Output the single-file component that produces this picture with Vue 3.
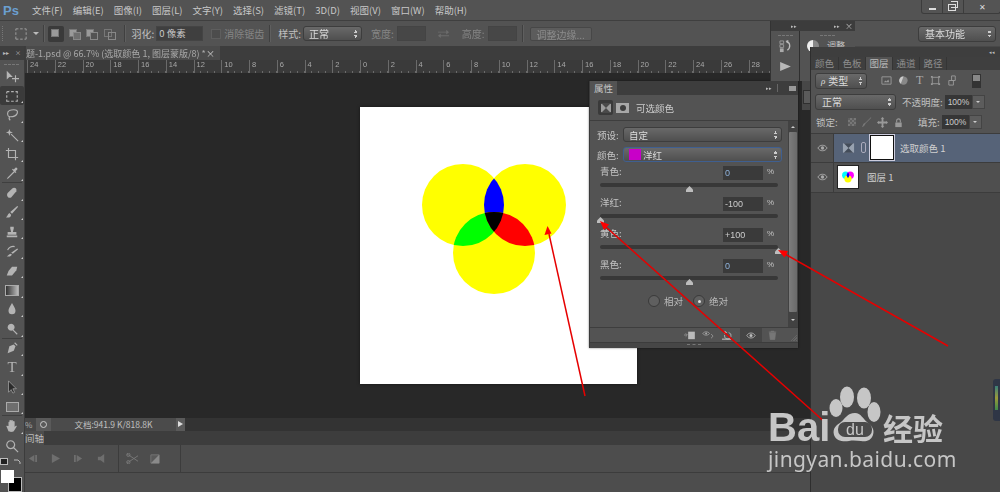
<script setup>
const menus = ['文件(F)', '编辑(E)', '图像(I)', '图层(L)', '文字(Y)', '选择(S)', '滤镜(T)', '3D(D)', '视图(V)', '窗口(W)', '帮助(H)']

const rulerLabels = [24, 22, 20, 18, 16, 14, 12, 10, 8, 6, 4, 2, 0, 2, 4, 6, 8, 10, 12, 14, 16, 18, 20, 22, 24, 26, 28]

// f = filled path, s = stroked path, sep = line above the tool, more = flyout corner
const tools = [
  { f: 'M2 2v10l3-3h4z', s: 'M12 7v8M8 11h8' },
  { s: 'M2 3h3M7 3h3M12 3h2v2M14 7v3M14 12v2h-2M10 14H7M5 14H2v-2M2 10V7M2 5V3', active: true, more: true },
  { s: 'M3 6c0-3 4-4 7-4s5 1 4 4-5 4-8 4-3-2-3-4zM5 10c-1 2 0 3 1 4', more: true },
  { f: 'M5 1l1 3 3 1-3 1-1 3-1-3-3-1 3-1z', s: 'M7 7l8 8', more: true },
  { s: 'M4 1v11h11M1 4h11v11', more: true },
  { f: 'M10 6l-7 7-1 2 2-1 7-7zM9 3l1 1 2-2c1-1 3 1 2 2l-2 2 1 1-1 1-4-4z', more: true },
  { f: 'M3 8l5-5c2-2 6-1 5 3l-6 7c-3 2-6-2-4-5z', sep: true, more: true },
  { f: 'M14 1l1 1-7 8-2-2zM5 9l2 2c0 3-3 4-6 3 2-1 2-4 4-5z', more: true },
  { f: 'M6 2h4v2l-1 4h4v3H3V8h4L6 4zM2 12h12v2H2z', more: true },
  { f: 'M14 5l1 1-6 5-2-1zM6 11l2 1c-1 2-3 3-6 2 2-1 2-2 4-3z', s: 'M3 7c1-3 5-5 8-4', more: true },
  { f: 'M8 3h6l-1 4-5 6H2l2-5z', more: true },
  { grad: true, more: true },
  { f: 'M8 1c2 4 4 6 4 9a4 4 0 0 1-8 0c0-3 2-5 4-9z', more: true },
  { f: 'M7 2a4 4 0 1 0 .01 0z', s: 'M9 9l5 5', more: true },
  { f: 'M3 14l2-8 5-2 2 2-2 5z', s: 'M11 2l3 3', sep: true, more: true },
  { text: 'T', more: true },
  { f: 'M4 1v13l3-3 2 4 2-1-2-4h4z', dark: true, more: true },
  { box: true, more: true },
  { f: 'M4 8V4c0-1 1-1 1 0v3V2c0-1 2-1 2 0v5V2c0-1 2-1 2 0v5V3c0-1 2-1 2 0v6l1-1c1-1 2 0 1 1l-3 5c-1 1-5 1-6 0L2 9c-1-1 0-2 1-1z', sep: true, more: true },
  { s: 'M6.5 2a4.5 4.5 0 1 0 .01 0zM10 10l5 5' }
]

const colorRows = [
  { name: '青色', value: '0', pos: 50, blue: true },
  { name: '洋红', value: '-100', pos: 0 },
  { name: '黄色', value: '+100', pos: 100 },
  { name: '黑色', value: '0', pos: 50, blue: true }
]

const layerTabs = ['颜色', '色板', '图层', '通道', '路径']
</script>

<template>
  <div class="ps">
    <div class="shell">
      <header class="menu">
        <span class="logo">Ps</span>
        <nav class="menu-items">
          <span v-for="m in menus" :key="m">{{ m }}</span>
        </nav>
        <div class="win-btns">
          <span class="win-btn min"><i></i></span>
          <span class="win-btn res"><i></i><b></b></span>
          <span class="win-btn cls">✕</span>
        </div>
      </header>

      <div class="options">
        <span class="grip-v"></span>
        <svg class="opt-ico first" viewBox="0 0 14 14"><path d="M1 1h3M6 1h3M11 1h2v2M13 5v3M13 10v3h-2M9 13H6M4 13H1v-3M1 8V5M1 3V1" fill="none" stroke="#aaa" /></svg>
        <span class="caret"></span>
        <span class="opt-sep"></span>
        <span class="mode active"><i></i></span>
        <span class="mode plus"><i></i><b></b></span>
        <span class="mode minus"><i></i><b></b></span>
        <span class="mode cross"><i></i><b></b></span>
        <span class="opt-sep s2"></span>
        <span class="lbl l-feather">羽化:</span>
        <span class="field f-feather">0 像素</span>
        <span class="check"></span>
        <span class="lbl dim">消除锯齿</span>
        <span class="opt-sep s3"></span>
        <span class="lbl l-style">样式:</span>
        <span class="select s-style">正常</span>
        <span class="lbl dim l-w">宽度:</span>
        <span class="field blank"></span>
        <svg class="swap" viewBox="0 0 14 12"><path d="M1 4h9V2l3 2.5L10 7V5H1zM13 8H4V6L1 8.500 4 11V9h9z" fill="#6c6c6c" /></svg>
        <span class="lbl dim l-h">高度:</span>
        <span class="field blank"></span>
        <span class="opt-sep s4"></span>
        <span class="edge-btn">调整边缘...</span>
        <span class="select s-work">基本功能</span>
      </div>

      <div class="work">
        <aside class="tools">
          <div class="tools-head"><span>▸▸</span><span>×</span></div>
          <div class="tools-grip"></div>
          <div class="tool-list">
            <div v-for="(t, i) in tools" :key="i" class="tool" :class="{ on: t.active, sep: t.sep, more: t.more }">
              <span v-if="t.text" class="tool-t">{{ t.text }}</span>
              <span v-else-if="t.grad" class="tool-grad"></span>
              <span v-else-if="t.box" class="tool-box"></span>
              <svg v-else viewBox="0 0 16 16" class="tool-ico">
                <path v-if="t.f" :d="t.f" :fill="t.dark ? '#2b2b2b' : '#b4b4b4'" :stroke="t.dark ? '#aaa' : 'none'" stroke-width=".8" />
                <path v-if="t.s" :d="t.s" fill="none" stroke="#b4b4b4" stroke-width="1.3" />
              </svg>
            </div>
          </div>
          <div class="swatches">
            <span class="mini-sw"></span>
            <svg class="sw-swap" viewBox="0 0 8 8"><path d="M1 2h4l2 2v2" fill="none" stroke="#bbb" /></svg>
            <span class="sw-bg"></span>
            <span class="sw-fg"></span>
          </div>
        </aside>

        <main class="center">
          <div class="tabs">
            <div class="doc-tab">
              <span class="doc-title">题-1.psd @ 66.7% (选取颜色 1, 图层蒙版/8) *</span>
              <span class="doc-x">×</span>
            </div>
          </div>
          <div class="ruler">
            <span v-for="(n, i) in rulerLabels" :key="i" class="rule-cell">{{ n }}</span>
          </div>
          <div class="canvas">
            <svg class="doc" viewBox="0 0 277 277">
              <defs>
                <clipPath id="cl"><circle cx="103" cy="98" r="41" /></clipPath>
                <clipPath id="cr"><circle cx="165" cy="98" r="41" /></clipPath>
                <clipPath id="cb"><circle cx="134" cy="146" r="41" /></clipPath>
              </defs>
              <rect width="277" height="277" fill="#fff" />
              <circle cx="103" cy="98" r="41" fill="#ff0" />
              <circle cx="165" cy="98" r="41" fill="#ff0" />
              <circle cx="134" cy="146" r="41" fill="#ff0" />
              <g clip-path="url(#cl)"><circle cx="165" cy="98" r="41" fill="#00f" /></g>
              <g clip-path="url(#cl)"><circle cx="134" cy="146" r="41" fill="#0f0" /></g>
              <g clip-path="url(#cr)"><circle cx="134" cy="146" r="41" fill="#f00" /></g>
              <g clip-path="url(#cl)"><g clip-path="url(#cr)"><circle cx="134" cy="146" r="41" fill="#000" /></g></g>
            </svg>
          </div>
          <div class="status">
            <span class="st-pct">%</span>
            <span class="st-ico"><i></i></span>
            <span class="st-doc">文档:941.9 K/818.8K</span>
            <span class="st-arrow"></span>
          </div>
          <div class="timeline">
            <div class="tl-head"><div class="tl-tab"><span>间轴</span></div></div>
            <div class="tl-body">
              <div class="tl-controls">
                <svg viewBox="0 0 12 10"><path d="M8 1v8L2 5zM9 1h2v8H9z" fill="#6e6e6e" /></svg>
                <svg viewBox="0 0 12 10"><path d="M2 0v10l9-5z" fill="#6e6e6e" /></svg>
                <svg viewBox="0 0 12 10"><path d="M4 1v8l6-4zM1 1h2v8H1z" fill="#6e6e6e" /></svg>
                <svg viewBox="0 0 12 10"><path d="M2 3h3l4-3v10L5 7H2z" fill="#6e6e6e" /></svg>
                <span class="tl-sep"></span>
                <svg class="scissors" viewBox="0 0 14 12"><path d="M1 1l12 8M1 11l12-8" stroke="#7a7a7a" fill="none" /><circle cx="2.500" cy="2" r="1.800" fill="none" stroke="#7a7a7a" /><circle cx="2.500" cy="10" r="1.800" fill="none" stroke="#7a7a7a" /></svg>
                <svg class="trans" viewBox="0 0 12 12"><path d="M1 1h10v10H1z" fill="#5a5a5a" stroke="#7a7a7a" /><path d="M11 1v10H1z" fill="#8a8a8a" /></svg>
                <span class="tl-sep s2"></span>
              </div>
            </div>
          </div>
        </main>

        <aside class="dock">
          <div class="layers-top"><span>◂◂</span></div>
          <div class="layer-tabs">
            <span v-for="t in layerTabs" :key="t" class="ltab" :class="{ on: t === '图层' }">{{ t }}</span>
          </div>
          <div class="l-row filter">
            <span class="select s-kind"><em>ρ</em> 类型</span>
            <svg class="f-ico" viewBox="0 0 12 12"><path d="M1 2h10v8H1z" fill="none" stroke="#999" /><path d="M3 8l2-2 1 1 2-2 1 3z" fill="#999" /></svg>
            <svg class="f-ico" viewBox="0 0 12 12"><circle cx="6" cy="6" r="4.500" fill="#888" /><path d="M6 1.500a4.500 4.500 0 0 0-3 8z" fill="#ccc" /></svg>
            <span class="f-t">T</span>
            <svg class="f-ico" viewBox="0 0 12 12"><path d="M2.500 2.500h7v7h-7z" fill="none" stroke="#999" /><path d="M1 1h2v2H1zM9 1h2v2H9zM1 9h2v2H1zM9 9h2v2H9z" fill="#999" /></svg>
            <svg class="f-ico" viewBox="0 0 12 12"><path d="M5 1h4v5H5zM2 6h5v5H2z" fill="none" stroke="#999" /></svg>
            <span class="f-toggle"></span>
          </div>
          <div class="l-row blend">
            <span class="select s-blend">正常</span>
            <span class="lbl l-op">不透明度:</span>
            <span class="num">100%</span><span class="num-drop"></span>
          </div>
          <div class="l-row lock">
            <span class="lbl l-lock">锁定:</span>
            <span class="lk checker"></span>
            <svg class="lk-ico" viewBox="0 0 12 12"><path d="M11 1l-6 6-1 2c-1 1-2 2-3 2 1-1 1-3 2-4l2-1 6-6z" fill="#777" /></svg>
            <svg class="lk-ico" viewBox="0 0 12 12"><path d="M6 0l2 2H7v3h3V4l2 2-2 2V7H7v3h1l-2 2-2-2h1V7H2v1L0 6l2-2v1h3V2H4z" fill="#999" /></svg>
            <svg class="lk-ico" viewBox="0 0 12 12"><path d="M4 6V4a2 2 0 0 1 4 0v2" fill="none" stroke="#999" stroke-width="1.200" /><path d="M2.500 6h7v5h-7z" fill="#999" /></svg>
            <span class="lbl l-fill">填充:</span>
            <span class="num">100%</span><span class="num-drop"></span>
          </div>
          <div class="layer sel">
            <span class="eye-col"><svg class="eye" viewBox="0 0 12 8"><path d="M1 4c2-4 8-4 10 0-2 4-8 4-10 0z" fill="none" stroke="#aaa" /><circle cx="6" cy="4" r="1.800" fill="#aaa" /></svg></span>
            <svg class="adj" viewBox="0 0 14 12"><path d="M1 1h12v10H1z" fill="#98a2b0" /><path d="M2 1h10L7 6zM2 11h10L7 6z" fill="#434c59" /></svg>
            <span class="chain"></span>
            <span class="mask"></span>
            <span class="layer-name">选取颜色 1</span>
          </div>
          <div class="layer">
            <span class="eye-col"><svg class="eye" viewBox="0 0 12 8"><path d="M1 4c2-4 8-4 10 0-2 4-8 4-10 0z" fill="none" stroke="#aaa" /><circle cx="6" cy="4" r="1.800" fill="#aaa" /></svg></span>
            <span class="thumb">
              <svg viewBox="0 0 22 24">
                <circle cx="8.500" cy="10" r="4" fill="#0ff" />
                <circle cx="13.500" cy="10" r="4" fill="#f0f" />
                <circle cx="11" cy="14" r="4" fill="#ff0" />
                <path d="M11 7a4 4 0 0 1 0 6 4 4 0 0 1 0-6z" fill="#00f" />
              </svg>
            </span>
            <span class="layer-name n2">图层 1</span>
          </div>
          <div class="meter"><i></i></div>
        </aside>
      </div>

      <!-- floating panels -->
      <section class="mini-panel">
        <div class="mini-head"><span class="a1">▸▸</span><span class="a2">▸▸</span><span class="a3">×</span></div>
        <div class="mini-body">
          <div class="mini-col one">
            <span class="grip-h"></span>
            <svg class="hist" viewBox="0 0 14 14"><path d="M1 1h4v3H1zM1 5h4v3H1z" fill="none" stroke="#999" /><path d="M1 9h4v4H1z" fill="#aaa" /><path d="M8 2c4 0 5 6 1 9" fill="none" stroke="#bbb" stroke-width="1.400" /><path d="M7 1l3-1v4z" fill="#bbb" /></svg>
            <svg class="play" viewBox="0 0 12 10"><path d="M0 0l12 5-12 5z" fill="#b8b8b8" /></svg>
          </div>
          <div class="mini-col two">
            <span class="grip-h"></span>
            <div class="adj-head"><span class="ring"></span><span>调整</span></div>
          </div>
        </div>
      </section>
      <span class="peek"><i></i></span>

      <section class="props">
        <div class="props-head">
          <span class="props-tab">属性</span>
          <span class="head-right">▸▸<i></i><b></b></span>
        </div>
        <div class="props-sub">
          <span class="sub-btn on">
            <svg viewBox="0 0 14 12"><path d="M1 1h12v10H1z" fill="#9c9c9c" /><path d="M2 1h10L7 6zM2 11h10L7 6z" fill="#4a4a4a" /></svg>
          </span>
          <span class="sub-btn mask-btn"><i></i></span>
          <span class="sub-title">可选颜色</span>
        </div>
        <div class="props-body">
          <div class="props-content">
            <div class="pick">
              <span class="pick-lbl">预设:</span>
              <span class="select s-pick">自定</span>
            </div>
            <div class="pick p2">
              <span class="pick-lbl">颜色:</span>
              <span class="select s-pick focus"><i class="magenta"></i>洋红</span>
            </div>
            <div v-for="r in colorRows" :key="r.name" class="cr">
              <div class="cr-top">
                <span class="cr-name">{{ r.name }}:</span>
                <span class="cr-val" :class="{ blue: r.blue }">{{ r.value }}</span>
                <span class="cr-pct">%</span>
              </div>
              <div class="track">
                <span class="knob" :style="{ left: r.pos + '%' }"></span>
              </div>
            </div>
            <div class="radios">
              <span class="radio"></span><span class="r-lbl">相对</span>
              <span class="radio checked"></span><span class="r-lbl">绝对</span>
            </div>
          </div>
          <div class="scroll">
            <span class="sc-up"></span>
            <span class="sc-thumb"></span>
            <span class="sc-down"></span>
          </div>
        </div>
        <div class="props-foot">
          <svg class="pf first" viewBox="0 0 14 12"><path d="M6 2h8v9H6z" fill="#bbb" /><path d="M1 6h3M3 4l2 2-2 2" fill="none" stroke="#999" /></svg>
          <svg class="pf" viewBox="0 0 16 12"><path d="M1 4c2-3 7-3 9 0-2 3-7 3-9 0z" fill="none" stroke="#aaa" /><circle cx="5.500" cy="4" r="1.300" fill="#aaa" /><path d="M12 5c3 1 3 4 0 5" fill="none" stroke="#aaa" /></svg>
          <svg class="pf" viewBox="0 0 14 12"><path d="M9 3a4 4 0 1 1-5 3" fill="none" stroke="#bbb" /><path d="M1 11h11" stroke="#ddd" /><path d="M4 1L7 3 4 5z" fill="#ccc" /></svg>
          <span class="pf-active"><svg viewBox="0 0 12 8"><path d="M1 4c2-4 8-4 10 0-2 4-8 4-10 0z" fill="none" stroke="#bbb" /><circle cx="6" cy="4" r="1.800" fill="#bbb" /></svg></span>
          <svg class="pf trash" viewBox="0 0 12 12"><path d="M2 3h8l-1 9H3zM1 2h10M4 2V1h4v1" fill="#777" stroke="#777" /></svg>
          <span class="resize"></span>
        </div>
        <div class="props-grip"><i></i></div>
      </section>
    </div>

    <!-- annotations added on top of the screenshot -->
    <svg class="arrows" viewBox="0 0 1000 492">
      <g stroke="#e60000" stroke-width="1.500" fill="none">
        <path d="M585 396L549 234" />
        <path d="M827 424L606 227" />
        <path d="M948 346L785 254" />
      </g>
      <g fill="#f00">
        <path d="M547.500 226l-3 9 7-1.500z" />
        <path d="M600 221l4 9 5-5.500z" />
        <path d="M778 250l6.500 7.500 3.500-6.500z" />
      </g>
    </svg>

    <div class="mark">
      <span class="mark-bai">Bai</span>
      <svg class="paw" viewBox="0 0 52 58">
        <ellipse cx="18" cy="11" rx="7" ry="10.500" fill="#c6c6c6" />
        <ellipse cx="35" cy="12" rx="7" ry="10.500" fill="#c6c6c6" />
        <ellipse cx="7" cy="22" rx="6.500" ry="9" fill="#c6c6c6" />
        <ellipse cx="45" cy="26" rx="6.500" ry="10" fill="#c6c6c6" />
        <path d="M26 27c6 0 8 6 12 9s8 7 6 13c-2 6-8 7-12 6-4 0-7-1-12 0-6 1-13 0-15-6-2-7 3-10 7-13s6-9 14-9z" fill="#c6c6c6" />
        <rect x="9" y="36" width="34" height="15" rx="7" fill="#4a4a4a" />
        <text x="26" y="49" text-anchor="middle" class="paw-du">du</text>
      </svg>
      <span class="mark-jy">经验</span>
      <span class="mark-url">jingyan.baidu.com</span>
    </div>
  </div>
</template>

<style>
html, body { margin: 0; background: #484848; }
</style>

<style scoped>
.ps {
  position: relative;
  width: 1000px;
  height: 492px;
  overflow: hidden;
  background: #484848;
  font-family: "Noto Sans CJK SC", "Liberation Sans", sans-serif;
  font-size: 10px;
  color: #c4c4c4;
}
.shell {
  position: relative;
  width: 1000px;
  height: 492px;
  filter: blur(0.45px);
}

/* menu */
.menu {
  height: 20px;
  background: #535353;
  border-bottom: 1px solid #3f3f3f;
  display: flex;
  align-items: center;
  position: relative;
}
.logo {
  font-family: "Liberation Sans", sans-serif;
  font-weight: 700;
  font-size: 13px;
  color: #6b9fd0;
  margin-left: 3px;
  width: 29px;
}
.menu-items { display: flex; gap: 10px; font-size: 9.5px; color: #c8c8c8; }
.win-btns {
  margin-left: auto;
  align-self: flex-start;
  display: flex;
  height: 13px;
  margin-right: -1px;
  border: 1px solid #3c3c3c;
  border-top: 0;
  border-radius: 0 0 3px 3px;
  background: #545454;
}
.win-btn { display: flex; align-items: center; justify-content: center; border-right: 1px solid #3c3c3c; position: relative; color: #ddd; font-size: 8px; }
.win-btn.min { width: 20px; }
.win-btn.min i { width: 7px; height: 2px; background: #ddd; margin-top: 4px; }
.win-btn.res { width: 20px; }
.win-btn.res i { width: 6px; height: 5px; border: 1px solid #ddd; margin: 1px 0 0 -2px; }
.win-btn.res b { position: absolute; left: 8px; top: 1px; width: 6px; height: 5px; border: 1px solid #ddd; border-width: 1px 1px 1px 0; }
.win-btn.cls { width: 36px; border-right: 0; }

/* options bar */
.options {
  height: 25px;
  background: #535353;
  display: flex;
  align-items: center;
}
.grip-v { width: 2px; height: 15px; margin-left: 2px; border-left: 1px dotted #777; }
.opt-ico.first { width: 12px; height: 12px; margin-left: 10px; }
.caret { width: 0; height: 0; border: 3px solid transparent; border-top-color: #bbb; margin: 3px 0 0 6px; }
.opt-sep { width: 1px; height: 17px; background: #404040; border-right: 1px solid #5f5f5f; margin-left: 4px; }
.opt-sep.s2 { margin-left: 7px; }
.opt-sep.s3 { margin-left: 5px; }
.opt-sep.s4 { margin-left: 5px; }
.mode { position: relative; width: 16px; height: 16px; margin-left: 1.500px; }
.mode.active { background: #3a3a3a; border-radius: 2px; margin-left: 3px; }
.mode i { position: absolute; left: 3px; top: 3px; width: 8px; height: 8px; background: #9a9a9a; border: 1px solid #777; box-sizing: border-box; }
.mode b { position: absolute; left: 7px; top: 6px; width: 8px; height: 8px; background: #6f6f6f; border: 1px solid #888; box-sizing: border-box; }
.mode.minus b { background: #535353; }
.mode.cross b { background: none; }
.mode.cross i { background: #535353; }
.lbl { white-space: nowrap; color: #c0c0c0; }
.lbl.dim { color: #858585; }
.l-feather { margin-left: 6px; }
.field {
  background: #3f3f3f;
  border: 1px solid #444;
  height: 13px;
  line-height: 13px;
  color: #c8c8c8;
  box-sizing: content-box;
}
.f-feather { width: 43px; margin: 0 8px 0 2px; padding-left: 2px; font-size: 9.5px; }
.check { width: 8px; height: 8px; background: #4c4c4c; border: 1px solid #5e5e5e; margin-right: 3px; }
.l-style { margin-left: 7px; }
.select {
  position: relative;
  display: flex;
  align-items: center;
  box-sizing: border-box;
  background: linear-gradient(#696969, #4f4f4f);
  border: 1px solid #3d3d3d;
  border-radius: 3px;
  color: #dcdcdc;
  white-space: nowrap;
  padding-left: 5px;
}
.select::after {
  content: "";
  position: absolute;
  right: 4px;
  top: 50%;
  margin-top: -4px;
  width: 3px;
  height: 8px;
  background:
    linear-gradient(135deg, transparent 40%, #ccc 40%) 0 0 / 2px 3px no-repeat,
    linear-gradient(225deg, transparent 40%, #ccc 40%) 100% 0 / 2px 3px no-repeat,
    linear-gradient(45deg, transparent 40%, #ccc 40%) 0 100% / 2px 3px no-repeat,
    linear-gradient(-45deg, transparent 40%, #ccc 40%) 100% 100% / 2px 3px no-repeat;
}
.s-style { width: 59px; height: 15px; margin-left: 2px; }
.l-w { margin-left: 9px; }
.blank { width: 27px; background: #474747; margin-left: 3px; }
.swap { width: 13px; height: 11px; margin-left: 11px; }
.l-h { margin-left: 12px; }
.edge-btn {
  margin-left: 6px;
  width: 62px;
  height: 14px;
  line-height: 13px;
  text-align: center;
  background: #5c5c5c;
  border: 1px solid #474747;
  border-radius: 2px;
  color: #8c8c8c;
  box-sizing: border-box;
}
.s-work { width: 78px; height: 16px; margin-left: auto; margin-right: 4px; padding-left: 6px; }

/* work area */
.work { display: flex; height: 446px; }
.tools { width: 25px; background: #535353; border-right: 1px solid #3c3c3c; box-sizing: border-box; position: relative; flex: none; }
.tools-head { height: 14px; background: #3e3e3e; display: flex; justify-content: space-between; padding: 0 3px; font-size: 6px; line-height: 14px; color: #bbb; }
.tools-grip { height: 1px; width: 15px; margin: 4px 0 0 4px; border-top: 1px dashed #777; }
.tool-list { margin-top: 0.500px; }
.tool { position: relative; width: 24px; height: 19.450px; display: flex; align-items: center; justify-content: center; box-sizing: border-box; }
.tool.on { background: #3b3b3b; border-radius: 2px; }
.tool.sep::before { content: ""; position: absolute; left: 2px; right: 2px; top: -1px; height: 1px; background: #3f3f3f; }
.tool.more::after { content: ""; position: absolute; right: 1px; bottom: 2px; border: 1px solid transparent; border-right-color: #ccc; border-bottom-color: #ccc; }
.tool-ico { width: 14px; height: 14px; }
.tool-t { font-family: "Liberation Serif", serif; font-size: 15px; line-height: 15px; color: #b4b4b4; }
.tool-grad { width: 12px; height: 9px; border: 1px solid #aaa; background: linear-gradient(90deg, #333, #bbb); }
.tool-box { width: 11px; height: 8px; border: 1px solid #aaa; background: #6e6e6e; }
.swatches { position: absolute; left: 0; top: 410px; width: 24px; height: 36px; }
.mini-sw { position: absolute; left: 0; top: 2px; width: 6px; height: 5px; background: #222; border: 1px solid #bbb; }
.sw-swap { position: absolute; left: 13px; top: 2px; width: 8px; height: 8px; }
.sw-bg { position: absolute; left: 8px; top: 21px; width: 12px; height: 13px; background: #000; border: 1px solid #bbb; }
.sw-fg { position: absolute; left: 1px; top: 14px; width: 13px; height: 13px; background: #fff; }

.center { width: 785px; flex: none; display: flex; flex-direction: column; }
.tabs { height: 14px; background: #3d3d3d; display: flex; }
.doc-tab {
  width: 194px;
  margin-left: 1px;
  background: #4b4b4b;
  display: flex;
  align-items: center;
  white-space: nowrap;
  color: #a9a9a9;
  font-size: 9px;
  padding-right: 5px;
  box-sizing: border-box;
}
.doc-title { flex: none; }
.doc-x { flex: none; margin-left: auto; color: #ccc; font-size: 9px; }
.ruler {
  height: 13px;
  background: #3a3a3a;
  display: flex;
  padding-left: 2px;
  overflow: hidden;
  flex: none;
}
.rule-cell {
  flex: none;
  width: 27.750px;
  box-sizing: border-box;
  border-left: 1px solid #6a6a6a;
  padding-left: 2px;
  font-family: "Liberation Sans", sans-serif;
  font-size: 7.500px;
  line-height: 9px;
  color: #a8a8a8;
  background: repeating-linear-gradient(90deg, transparent 0 5.500px, #6a6a6a 5.500px 6.500px, transparent 6.500px 6.900px) 0 100% / 100% 2px no-repeat;
}
.canvas { flex: 1; background: #282828; padding: 34px 0 0 335px; box-sizing: border-box; min-height: 0; }
.doc { display: block; width: 277px; height: 277px; box-shadow: 0 0 3px rgba(0, 0, 0, .5); }
.status { height: 13px; flex: none; background: #333; display: flex; align-items: stretch; }
.st-pct { width: 11px; font-size: 8px; line-height: 13px; color: #aaa; background: #474747; text-align: left; }
.st-ico { width: 15px; background: #5a5a5a; display: flex; align-items: center; justify-content: center; }
.st-ico i { width: 7px; height: 7px; border: 1.500px solid #ccc; border-radius: 50%; box-sizing: border-box; }
.st-doc { width: 125px; background: #4b4b4b; text-align: center; font-size: 8.500px; line-height: 13px; color: #c0c0c0; }
.st-arrow { width: 9px; background: #5a5a5a; position: relative; }
.st-arrow::after { content: ""; position: absolute; left: 2px; top: 3px; border: 3.500px solid transparent; border-left: 5px solid #ddd; border-right: 0; }
.timeline { height: 61px; flex: none; display: flex; flex-direction: column; }
.tl-head { height: 14px; background: #3d3d3d; }
.tl-tab { width: 19px; height: 14px; background: #4d4d4d; white-space: nowrap; font-size: 9.500px; line-height: 14px; color: #bbb; }
.tl-body { flex: 1; background: #4d4d4d; }
.tl-controls {
  height: 27px;
  border-bottom: 1px solid #3c3c3c;
  display: flex;
  align-items: center;
}
.tl-controls svg { width: 11px; height: 9px; flex: none; margin-left: 12px; }
.tl-controls svg:first-child { margin-left: 2px; }
.tl-sep { width: 1px; height: 27px; background: #3c3c3c; margin-left: 11px; }
.tl-controls .scissors { width: 13px; height: 11px; margin-left: 7px; }
.tl-controls .trans { width: 10px; height: 10px; margin-left: 11px; }
.tl-sep.s2 { margin-left: 20px; }

/* layers dock */
.dock { flex: 1; position: relative; z-index: 3; background: #484848; border-left: 1px solid #2e2e2e; box-sizing: border-box; margin-top: 0.500px; }
.layers-top { height: 10px; background: #3e3e3e; text-align: right; padding-right: 5px; font-size: 5px; line-height: 10px; color: #bbb; }
.layer-tabs { height: 13px; background: #3f3f3f; display: flex; font-size: 9.500px; color: #8e8e8e; }
.ltab { text-align: center; line-height: 13px; border-right: 1px solid #353535; box-sizing: content-box; width: 26px; }
.ltab:first-child { width: 27px; }
.ltab.on { background: #535353; color: #bbb; }
.l-row { display: flex; align-items: center; background: #535353; }
.filter { height: 22px; }
.s-kind { width: 52px; height: 16px; margin-left: 4px; padding-left: 5px; }
.s-kind em { font-family: "Liberation Serif", serif; font-size: 9px; margin-right: 3px; }
.f-ico { width: 11px; height: 11px; margin-left: 6px; flex: none; }
.s-kind + .f-ico { margin-left: 14px; }
.f-t { font-family: "Liberation Serif", serif; font-size: 12px; margin-left: 7px; color: #a8a8a8; width: 8px; }
.f-toggle { width: 7px; height: 12px; margin-left: 14px; background: linear-gradient(#888 50%, #333 50%); border: 1px solid #333; }
.blend { height: 20px; }
.s-blend { width: 81px; height: 16px; margin-left: 4px; padding-left: 6px; }
.l-op { margin-left: 6px; width: 43px; font-size: 9.500px; }
.num { width: 27px; height: 14px; background: #363636; font-size: 8.500px; line-height: 14px; text-align: center; font-family: "Liberation Sans", sans-serif; color: #ccc; }
.num-drop { width: 13px; height: 14px; background: #5c5c5c; border: 1px solid #444; box-sizing: border-box; position: relative; }
.num-drop::after { content: ""; position: absolute; left: 3px; top: 5px; border: 2px solid transparent; border-top-color: #ccc; }
.lock { height: 21px; border-bottom: 1px solid #3c3c3c; box-sizing: content-box; }
.l-lock { margin-left: 5px; width: 30px; font-size: 9.500px; }
.lk.checker { width: 8px; height: 8px; margin-left: 2px; background: repeating-conic-gradient(#777 0 25%, #606060 0 50%) 0 0 / 4px 4px; }
.lk-ico { width: 11px; height: 11px; margin-left: 5px; flex: none; }
.l-fill { margin-left: 14px; width: 24px; font-size: 9.500px; }
.layer { height: 29px; display: flex; align-items: center; border-bottom: 1px solid #3c3c3c; background: #4f4f4f; position: relative; }
.layer.sel { height: 28px; background: #566378; }
.eye-col { width: 23px; align-self: stretch; display: flex; align-items: center; justify-content: center; background: #505050; border-right: 1px solid #3c3c3c; box-sizing: border-box; }
.eye { width: 11px; height: 8px; }
.adj { width: 13px; height: 12px; margin-left: 8px; }
.chain { width: 3px; height: 9px; margin-left: 6px; border: 1px solid #aab; border-radius: 2px; }
.mask { width: 24px; height: 25px; background: #fff; margin-left: 4px; border: 1px solid #111; outline: 1px solid #ccd; outline-offset: 0; box-sizing: border-box; }
.layer-name { margin-left: 6px; color: #d0d0d0; font-size: 9.500px; }
.thumb { width: 22px; height: 24px; background: #fff; border: 1px solid #222; box-sizing: border-box; margin-left: 3px; display: block; }
.thumb svg { width: 100%; height: 100%; display: block; }
.layer-name.n2 { margin-left: 8px; }
.meter { position: absolute; right: 0; top: 332px; width: 7px; height: 42px; background: #2f3646; border-radius: 3px 0 0 3px; }
.meter i { display: block; width: 3px; height: 24px; margin: 7px 0 0 2px; background: linear-gradient(#3a7f7a, #9a9a3a, #3f8a4a); }

/* small floating panels */
.mini-panel { position: absolute; left: 770px; top: 21px; width: 85px; height: 60px; background: #3c3c3c; z-index: 1; border-left: 1px solid #333; box-sizing: border-box; }
.mini-head { height: 10px; position: relative; font-size: 5px; line-height: 10px; color: #bbb; }
.mini-head span { position: absolute; }
.mini-head .a1 { left: 20px; }
.mini-head .a2 { left: 63px; }
.mini-head .a3 { left: 74px; font-size: 8px; }
.mini-body { display: flex; gap: 1px; height: 50px; background: #2f2f2f; }
.mini-col { background: #535353; display: flex; flex-direction: column; align-items: center; }
.mini-col.one { width: 28px; }
.mini-col.two { flex: 1; }
.grip-h { width: 15px; border-top: 1px dashed #777; margin-top: 4px; }
.hist { width: 13px; height: 13px; margin-top: 4px; }
.play { width: 11px; height: 9px; margin-top: 9px; }
.adj-head { display: flex; align-items: center; gap: 8px; margin-top: 3px; width: 100%; padding-left: 7px; box-sizing: border-box; font-size: 9px; }
.ring { width: 12px; height: 12px; border-radius: 50%; background: linear-gradient(90deg, #eee 50%, #888 50%); }
.peek { position: absolute; left: 802px; top: 81px; width: 8px; height: 29px; background: #474747; }
.peek i { display: block; margin: 9px 0 0 1px; height: 14px; background: #5a5a5a; border: 1px solid #2f2f2f; border-right: 0; box-sizing: border-box; }

/* properties panel */
.props {
  position: absolute;
  left: 589px;
  top: 81px;
  width: 209px;
  height: 267px;
  background: #535353;
  border-left: 1px solid #3a3a3a;
  box-sizing: border-box;
  display: flex;
  flex-direction: column;
  box-shadow: 0 0 2px rgba(0, 0, 0, .5);
}
.props-head { height: 14px; background: #3d3d3d; display: flex; justify-content: space-between; flex: none; }
.props-tab { width: 27px; background: #535353; text-align: center; font-size: 9.500px; line-height: 14px; }
.head-right { position: relative; width: 32px; font-size: 5px; line-height: 14px; color: #bbb; }
.head-right i { position: absolute; left: 11px; top: 3px; width: 1px; height: 8px; background: #666; }
.head-right b { position: absolute; right: 2px; top: 5px; width: 7px; height: 5px; background: #999; }
.props-sub { height: 25px; flex: none; display: flex; align-items: center; border-bottom: 1px solid #3e3e3e; padding-left: 8px; }
.sub-btn { width: 15px; height: 15px; display: flex; align-items: center; justify-content: center; }
.sub-btn.on { background: #3a3a3a; border-radius: 2px; }
.sub-btn svg { width: 12px; height: 10px; }
.mask-btn { width: 13px; height: 10px; background: #a8a8a8; margin-left: 3px; }
.mask-btn i { width: 6px; height: 6px; border-radius: 50%; background: #3e3e3e; }
.sub-title { margin-left: 7px; font-size: 9.500px; color: #ccc; }
.props-body { flex: 1; display: flex; min-height: 0; }
.props-content { flex: 1; padding: 6px 0 0 7px; min-width: 0; }
.pick { display: flex; align-items: center; height: 15px; }
.pick.p2 { margin: 5px 0 4px; }
.pick-lbl { width: 26px; font-size: 9.500px; }
.s-pick { width: 159px; height: 15px; padding-left: 5px; font-size: 9.500px; }
.s-pick.focus { border-color: #3f5f90; }
.magenta { width: 12px; height: 11px; background: #c800c8; margin-right: 2px; }
.cr { height: 31px; padding-left: 3px; }
.cr-top { display: flex; align-items: center; height: 14px; }
.cr-name { width: 123px; font-size: 9.500px; margin-top: -4px; }
.cr-val { width: 40px; height: 14px; line-height: 14px; background: #3a3a3a; padding-left: 2px; box-sizing: border-box; font-family: "Liberation Sans", sans-serif; font-size: 9px; color: #ccc; }
.cr-val.blue { color: #8fb3dc; }
.cr-pct { margin-left: 4px; font-family: "Liberation Sans", sans-serif; font-size: 8px; margin-top: -4px; }
.track { position: relative; width: 178px; height: 4px; margin-top: 3px; background: #383838; border-radius: 2px; }
.knob { position: absolute; top: 3px; width: 7px; height: 6px; margin-left: -3px; background: #bdbdbd; clip-path: polygon(50% 0, 100% 60%, 100% 100%, 0 100%, 0 60%); }
.radios { display: flex; align-items: center; margin-top: 4px; padding-left: 51px; font-size: 9.500px; }
.radio { width: 10px; height: 10px; border-radius: 50%; background: #5f5f5f; border: 1px solid #3a3a3a; display: flex; align-items: center; justify-content: center; }
.radio.checked::after { content: ""; width: 3px; height: 3px; border-radius: 50%; background: #ddd; }
.r-lbl { margin: 0 10px 0 4px; color: #bbb; }
.scroll { width: 10px; flex: none; background: #424242; display: flex; flex-direction: column; align-items: center; }
.sc-up, .sc-down { width: 0; height: 0; border: 2.500px solid transparent; }
.sc-up { border-bottom-color: #ccc; margin-top: 3px; }
.sc-down { border-top-color: #ccc; margin-top: 7px; }
.sc-thumb { width: 8px; height: 180px; margin-top: 4px; background: linear-gradient(90deg, #7c7c7c, #6a6a6a); border-radius: 1px; }
.props-foot { height: 15px; flex: none; display: flex; align-items: center; border-top: 1px solid #3e3e3e; padding-left: 93px; box-sizing: border-box; position: relative; }
.pf { width: 12px; height: 10px; margin-left: 7px; flex: none; }
.pf.first { margin-left: 0; }
.pf-active { width: 22px; height: 14px; background: #454545; margin-left: 7px; display: flex; align-items: center; justify-content: center; }
.pf-active svg { width: 10px; height: 7px; }
.trash { width: 9px; margin-left: 6px; }
.resize { position: absolute; right: 1px; bottom: 1px; width: 7px; height: 7px; background: repeating-linear-gradient(135deg, transparent 0 1px, #666 1px 2px); clip-path: polygon(100% 0, 100% 100%, 0 100%); }
.props-grip { height: 5px; flex: none; background: #464646; border-top: 1px solid #3c3c3c; display: flex; justify-content: center; }
.props-grip i { width: 14px; height: 1px; margin-top: 1px; border-top: 1px dashed #777; }

/* overlays */
.arrows { position: absolute; left: 0; top: 0; width: 1000px; height: 492px; z-index: 10; pointer-events: none; }
.mark { position: absolute; left: 0; top: 0; width: 1000px; height: 492px; z-index: 11; pointer-events: none; color: #c6c6c6; }
.mark-bai { position: absolute; left: 768px; top: 405px; font-family: "Liberation Sans", sans-serif; font-weight: 700; font-size: 40px; line-height: 44px; }
.paw { position: absolute; left: 829px; top: 386px; width: 52px; height: 58px; }
.paw-du { font-family: "Liberation Sans", sans-serif; font-size: 16px; font-weight: 400; fill: #c6c6c6; }
.mark-jy { position: absolute; left: 883px; top: 410px; font-size: 30px; line-height: 34px; font-weight: 700; letter-spacing: 0; }
.mark-url { position: absolute; left: 768px; top: 446px; font-family: "Noto Sans", sans-serif; font-size: 21px; line-height: 26px; letter-spacing: 0.400px; }
</style>
